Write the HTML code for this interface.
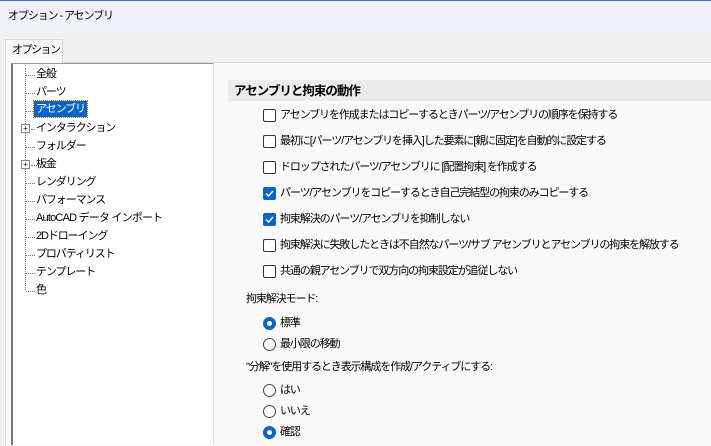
<!DOCTYPE html><html><head><meta charset="utf-8"><style>
body{margin:0;width:711px;height:445px;overflow:hidden;background:#f0f0f0;font-family:"Liberation Sans","Noto Sans CJK JP",sans-serif;font-size:11px;letter-spacing:-1.1px;color:#000;position:relative}
.a{position:absolute;white-space:nowrap;line-height:16px}
.title{position:absolute;left:0;top:0;width:711px;height:31px;background:#eef2f8;border-top:1px solid #3b78d8;box-sizing:border-box}
.panel{position:absolute;left:5px;top:62px;width:706px;height:383px;background:#f9f9f9;border-top:1px solid #d9d9d9;border-left:1px solid #d9d9d9}
.tab{position:absolute;left:5px;top:39px;width:58px;height:24px;background:#f9f9f9;border:1px solid #d9d9d9;border-bottom:none;box-sizing:border-box}
.tree{position:absolute;left:11px;top:63px;width:203px;height:382px;background:#fff;border-left:2px solid #777;border-top:1px solid #999;border-right:1px solid #ddd;box-sizing:border-box}
.cb{position:absolute;width:11px;height:11px;border:1px solid #333;border-radius:2px;background:#fff}
.cb.on{background:#0a64c8;border-color:#0a64c8}
.rb{position:absolute;width:11px;height:11px;border:1px solid #444;border-radius:50%;background:#fff}
.rb.on{border:4px solid #0a64c8;width:5px;height:5px}
.dv{position:absolute;left:25px;border-left:1px dotted #777}
.dh{position:absolute;width:9px;border-top:1px dotted #777}
.pl{position:absolute;width:7px;height:7px;border:1px solid #888;background:#fff;font-size:8px;line-height:7px;text-align:center;letter-spacing:0}
</style></head><body>
<div class="title"></div>
<div class="a" style="left:8px;top:8px">オプション - アセンブリ</div>
<div class="panel"></div>
<div class="tab"></div>
<div class="a" style="left:12px;top:42px;letter-spacing:-1.5px">オプション</div>
<div class="tree"></div>
<div class="dv" style="top:68px;height:222px"></div>
<div class="dh" style="left:26px;top:75px"></div><div class="a" style="left:36px;top:66px">全般</div>
<div class="dh" style="left:26px;top:93px"></div><div class="a" style="left:36px;top:84px">パーツ</div>
<div class="dh" style="left:26px;top:111px"></div><div class="a" style="left:34px;top:101px;background:#0a64c8;color:#fff;padding:0 2px;outline:1px dotted #d60">アセンブリ</div>
<div class="pl" style="left:21px;top:124px">+</div><div class="dh" style="left:31px;top:129px;width:4px"></div><div class="a" style="left:36px;top:120px">インタラクション</div>
<div class="dh" style="left:26px;top:147px"></div><div class="a" style="left:36px;top:138px">フォルダー</div>
<div class="pl" style="left:21px;top:160px">+</div><div class="dh" style="left:31px;top:165px;width:4px"></div><div class="a" style="left:36px;top:156px">板金</div>
<div class="dh" style="left:26px;top:183px"></div><div class="a" style="left:36px;top:174px">レンダリング</div>
<div class="dh" style="left:26px;top:201px"></div><div class="a" style="left:36px;top:192px">パフォーマンス</div>
<div class="dh" style="left:26px;top:219px"></div><div class="a" style="left:36px;top:210px;letter-spacing:-0.8px">AutoCAD データ インポート</div>
<div class="dh" style="left:26px;top:237px"></div><div class="a" style="left:36px;top:228px">2Dドローイング</div>
<div class="dh" style="left:26px;top:255px"></div><div class="a" style="left:36px;top:246px">プロパティリスト</div>
<div class="dh" style="left:26px;top:273px"></div><div class="a" style="left:36px;top:264px">テンプレート</div>
<div class="dh" style="left:26px;top:291px"></div><div class="a" style="left:36px;top:282px">色</div>
<div style="position:absolute;left:228px;top:80px;width:483px;height:21px;background:#ebebeb"></div>
<div class="a" style="left:234px;top:83px;font-weight:bold;font-size:12.5px;letter-spacing:-1px">アセンブリと拘束の動作</div>
<div class="cb" style="left:263px;top:109px"></div><div class="a" style="left:280px;top:107px">アセンブリを作成またはコピーするときパーツ/アセンブリの順序を保持する</div>
<div class="cb" style="left:263px;top:135px"></div><div class="a" style="left:280px;top:133px">最初に[パーツ/アセンブリを挿入]した要素に[親に固定]を自動的に設定する</div>
<div class="cb" style="left:263px;top:161px"></div><div class="a" style="left:280px;top:159px">ドロップされたパーツ/アセンブリに [配置拘束] を作成する</div>
<div class="cb on" style="left:263px;top:187px"><svg width="11" height="11" style="position:absolute;left:0;top:0"><path d="M2 5.5L4.5 8L9 3" stroke="#fff" stroke-width="1.5" fill="none"/></svg></div><div class="a" style="left:280px;top:185px">パーツ/アセンブリをコピーするとき自己完結型の拘束のみコピーする</div>
<div class="cb on" style="left:263px;top:213px"><svg width="11" height="11" style="position:absolute;left:0;top:0"><path d="M2 5.5L4.5 8L9 3" stroke="#fff" stroke-width="1.5" fill="none"/></svg></div><div class="a" style="left:280px;top:211px">拘束解決のパーツ/アセンブリを抑制しない</div>
<div class="cb" style="left:263px;top:239px"></div><div class="a" style="left:280px;top:237px">拘束解決に失敗したときは不自然なパーツ/サブ アセンブリとアセンブリの拘束を解放する</div>
<div class="cb" style="left:263px;top:265px"></div><div class="a" style="left:280px;top:263px">共通の親アセンブリで双方向の拘束設定が追従しない</div>
<div class="a" style="left:246px;top:291px">拘束解決モード:</div>
<div class="rb on" style="left:263px;top:317px"></div><div class="a" style="left:280px;top:315px">標準</div>
<div class="rb" style="left:263px;top:338px"></div><div class="a" style="left:280px;top:336px">最小限の移動</div>
<div class="a" style="left:246px;top:359px">"分解"を使用するとき表示構成を作成/アクティブにする:</div>
<div class="rb" style="left:263px;top:384px"></div><div class="a" style="left:280px;top:382px">はい</div>
<div class="rb" style="left:263px;top:405px"></div><div class="a" style="left:280px;top:403px">いいえ</div>
<div class="rb on" style="left:263px;top:426px"></div><div class="a" style="left:280px;top:424px">確認</div>
</body></html>
